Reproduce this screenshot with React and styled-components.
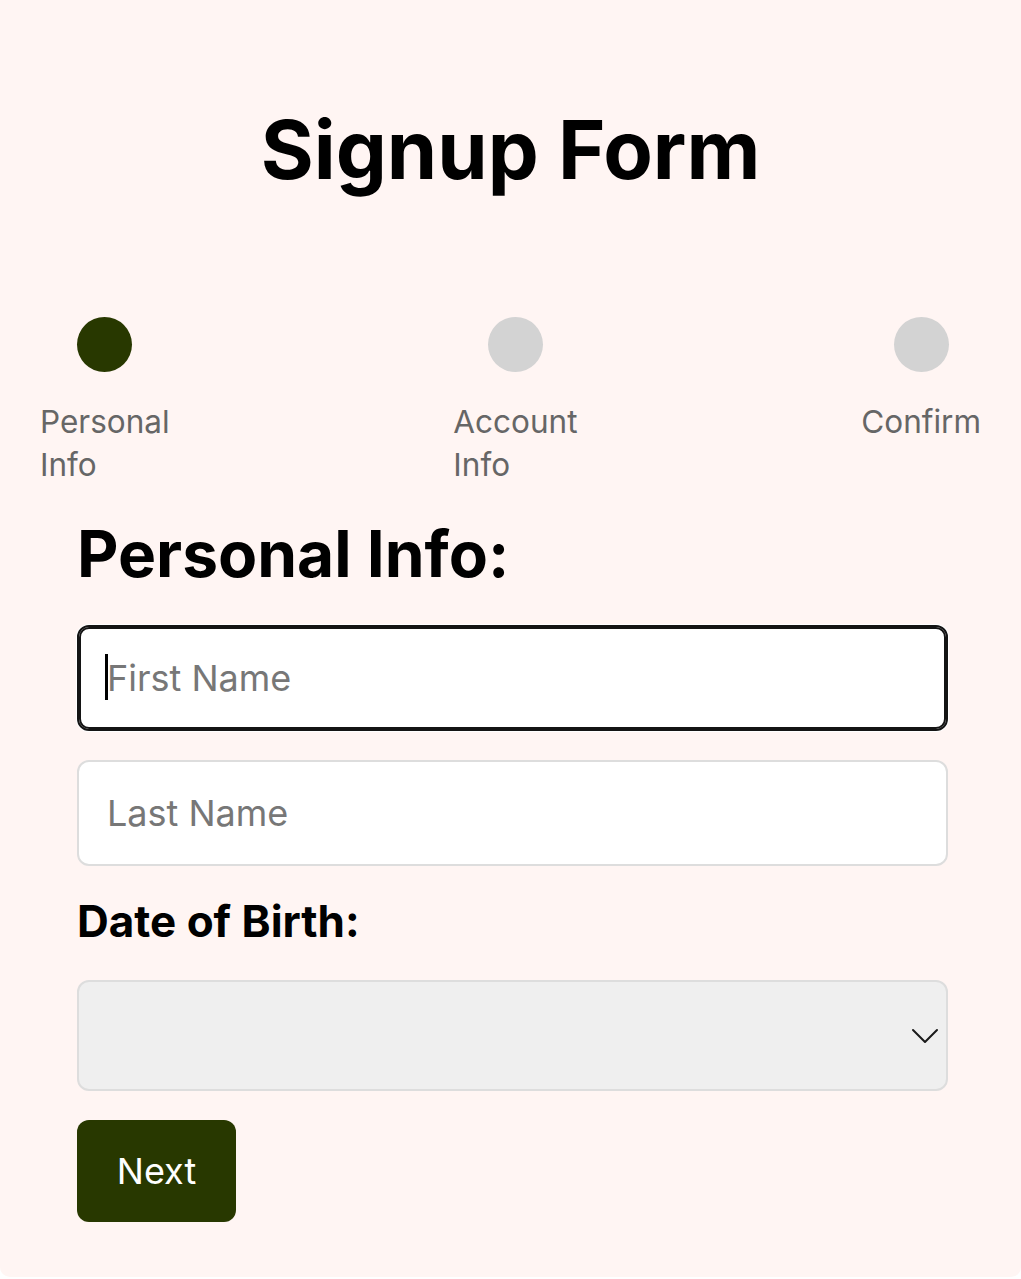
import React from "react";
import styled, { createGlobalStyle } from "styled-components";
import { ChevronDown } from "lucide-react";

const GlobalStyle = createGlobalStyle`
  html, body {
    margin: 0;
    padding: 0;
    background: #ffffff;
    font-family: Inter, "Noto Sans", "Liberation Sans", sans-serif;
  }
  * {
    box-sizing: border-box;
  }
`;

const Card = styled.div`
  background: #fff5f3;
  border-radius: 0 0 10px 10px;
  min-height: 1277px;
  padding: 102px 40px 55px;
`;

const Title = styled.h1`
  margin: 0;
  font-size: 81px;
  line-height: 97px;
  font-weight: 700;
  color: #000;
  text-align: center;
`;

const Steps = styled.div`
  display: flex;
  justify-content: space-between;
  align-items: flex-start;
  margin-top: 118px;
`;

const Step = styled.div`
  display: flex;
  flex-direction: column;
  align-items: center;
`;

const Dot = styled.div`
  width: 55px;
  height: 55px;
  border-radius: 50%;
  background: ${(p) => (p.$active ? "#283800" : "#d3d3d3")};
`;

const StepLabel = styled.span`
  margin-top: 28px;
  width: min-content;
  font-size: 31.5px;
  line-height: 43px;
  color: #666;
`;

const Form = styled.form`
  display: flex;
  flex-direction: column;
  padding: 0 33px 0 37px;
  margin-top: 29px;
`;

const Heading = styled.h2`
  margin: 0 0 33px;
  font-size: 64px;
  line-height: 77px;
  font-weight: 700;
  color: #000;
`;

const Field = styled.div`
  position: relative;
  margin-bottom: 29px;
`;

const TextInput = styled.input`
  display: block;
  width: 100%;
  height: 106px;
  padding: 0 28px;
  border: 2px solid ${(p) => (p.$focused ? "#141414" : "#dddddd")};
  border-radius: 12px;
  background: #fff;
  font-family: inherit;
  font-size: 36px;
  color: #111;
  outline: none;
  box-shadow: ${(p) =>
    p.$focused ? "inset 0 0 0 2px #141414, 0 0 0 1px #ffffff" : "none"};

  &::placeholder {
    color: #777;
  }
`;

const Caret = styled.span`
  position: absolute;
  left: 28px;
  top: 29px;
  width: 3px;
  height: 46px;
  background: #000;
`;

const SubLabel = styled.label`
  display: block;
  margin: 0 0 32px;
  font-size: 44px;
  line-height: 53px;
  font-weight: 700;
  color: #000;
`;

const SelectWrap = styled.div`
  position: relative;
  margin-bottom: 29px;
`;

const Select = styled.select`
  display: block;
  width: 100%;
  height: 111px;
  appearance: none;
  border: 2px solid #dddddd;
  border-radius: 12px;
  background: #efefef;
  font-family: inherit;
  font-size: 36px;
  outline: none;
`;

const Arrow = styled(ChevronDown)`
  position: absolute;
  right: -1px;
  top: 32px;
  pointer-events: none;
  color: #1a1a1a;
`;

const NextButton = styled.button`
  align-self: flex-start;
  width: 159px;
  height: 102px;
  border: none;
  border-radius: 12px;
  background: #283800;
  color: #fff;
  font-family: inherit;
  font-size: 36px;
  cursor: pointer;
`;

const steps = [
  { label: "Personal Info", active: true },
  { label: "Account Info" },
  { label: "Confirm" },
];

const App = () => {
  return (
    <>
      <GlobalStyle />
      <Card>
        <Title>Signup Form</Title>
        <Steps>
          {steps.map((s) => (
            <Step key={s.label}>
              <Dot $active={s.active} />
              <StepLabel>{s.label}</StepLabel>
            </Step>
          ))}
        </Steps>
        <Form onSubmit={(e) => e.preventDefault()}>
          <Heading>Personal Info:</Heading>
          <Field>
            <TextInput $focused placeholder="First Name" />
            <Caret />
          </Field>
          <Field>
            <TextInput placeholder="Last Name" />
          </Field>
          <SubLabel>Date of Birth:</SubLabel>
          <SelectWrap>
            <Select />
            <Arrow size={48} strokeWidth={1} />
          </SelectWrap>
          <NextButton type="submit">Next</NextButton>
        </Form>
      </Card>
    </>
  );
};

export default App;
